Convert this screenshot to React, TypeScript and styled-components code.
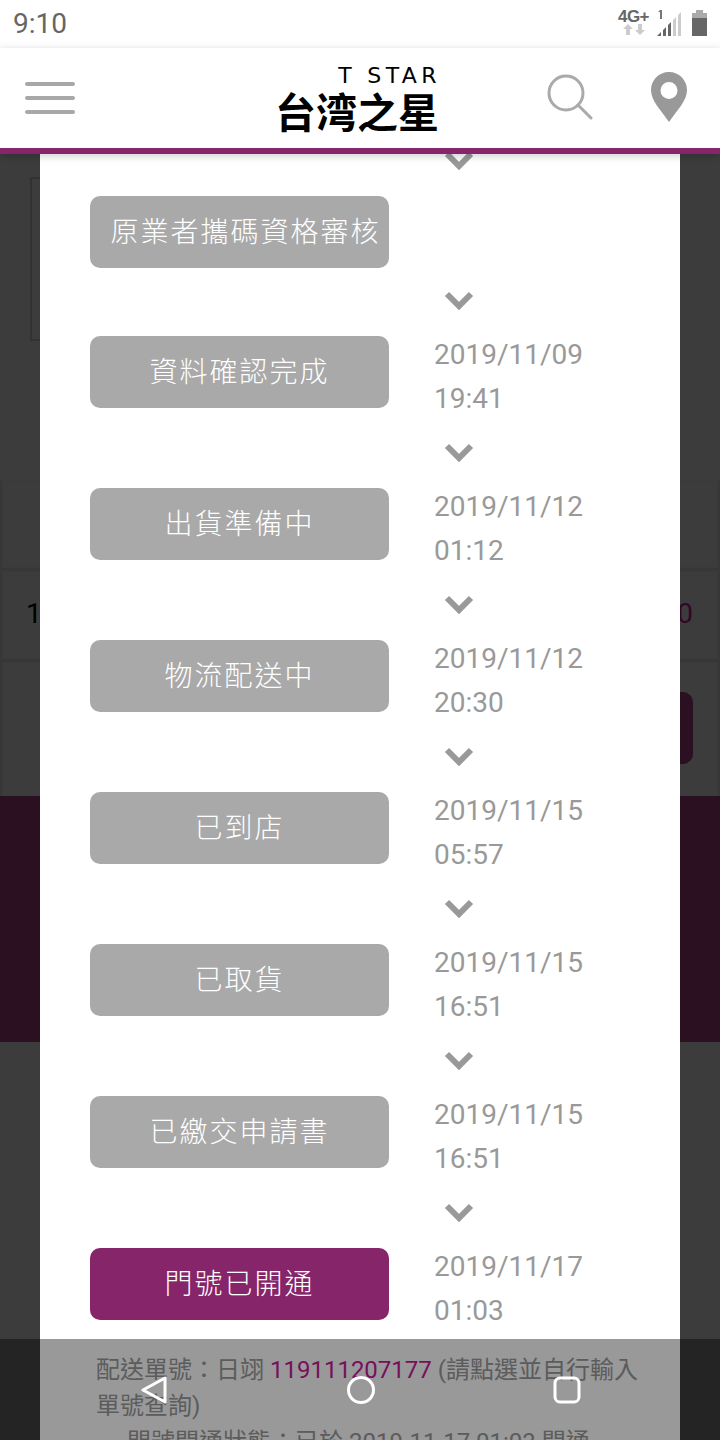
import { FC } from 'react';
import styled, { createGlobalStyle } from 'styled-components';

const GlobalStyle = createGlobalStyle`
  html, body {
    margin: 0;
    padding: 0;
    background: #fff;
  }
  * {
    box-sizing: border-box;
  }
`;

const Screen = styled.div`
  position: relative;
  display: flex;
  flex-direction: column;
  width: 720px;
  height: 1440px;
  overflow: hidden;
  font-family: Roboto, "Noto Sans CJK TC", sans-serif;
`;

/* status bar */
const StatusBar = styled.div`
  display: flex;
  align-items: center;
  justify-content: space-between;
  flex: none;
  height: 48px;
  padding: 0 13px;
  background: #fff;
`;

const Clock = styled.span`
  font-size: 28px;
  line-height: 1;
  color: #666;
`;

const StatusIcons = styled.div`
  display: flex;
  align-items: flex-start;
  height: 26px;
  margin-top: -2px;
`;

const Network = styled.div`
  display: flex;
  flex-direction: column;
  align-items: center;
  width: 31px;
  margin-right: 7px;
`;

const NetworkLabel = styled.span`
  font-family: "Liberation Sans", sans-serif;
  font-size: 17px;
  font-weight: 700;
  line-height: 14px;
  letter-spacing: -0.6px;
  white-space: nowrap;
  color: #666;
`;

const SignalIcon = styled.svg`
  margin-right: 10px;
`;

/* header */
const Header = styled.header`
  position: relative;
  z-index: 3;
  display: flex;
  align-items: center;
  flex: none;
  height: 106px;
  padding: 0 32px 6px 25px;
  background: #fff;
  border-bottom: 6px solid #86256a;
  box-shadow: 0 2px 8px rgba(0, 0, 0, 0.2);
`;

const Burger = styled.div`
  display: flex;
  flex-direction: column;
  gap: 10px;
  width: 50px;
  margin-right: 200px;
  margin-top: 5px;

  span {
    height: 4px;
    border-radius: 2px;
    background: #a8a8a8;
  }
`;

const Logo = styled.div`
  display: flex;
  flex-direction: column;
  align-items: flex-end;
  width: 164px;
  padding-top: 2px;
  color: #000;
  margin-right: 108px;
`;

const LogoLatin = styled.span`
  font-family: "DejaVu Sans", sans-serif;
  font-size: 22px;
  line-height: 22px;
  letter-spacing: 4.4px;
  margin: 6px -2px 0 0;
  white-space: nowrap;
`;

const LogoCjk = styled.span`
  font-family: "Noto Sans CJK TC", sans-serif;
  font-size: 41px;
  font-weight: 700;
  line-height: 46px;
  white-space: nowrap;
`;

const HeaderIcons = styled.div`
  display: flex;
  align-items: center;
  gap: 58px;
  margin-top: 4px;
`;

/* page behind the dialog */
const Stage = styled.div`
  position: relative;
  flex: 1;
  overflow: hidden;
  background: #f0f0f0;
`;

const InfoBox = styled.div`
  width: 300px;
  height: 164px;
  margin: 23px 0 139px 30px;
  border: 2px solid #c8c8c8;
`;

const Table = styled.div`
  display: flex;
  flex-direction: column;
  gap: 3px;
  background: #dcdcdc;
`;

const TableRow = styled.div<{ $height: number }>`
  display: flex;
  align-items: center;
  justify-content: space-between;
  height: ${p => p.$height}px;
  margin: 0 2px;
  padding: 0 24px 4px 23px;
  background: #f0f0f0;
  border: 1px solid #e8e8e8;
  font-size: 28px;
  color: #000;
`;

const Price = styled.span`
  color: #c8189a;
`;

const BuyButton = styled.div`
  width: 200px;
  height: 72px;
  margin-left: auto;
  margin-top: 2px;
  border-radius: 10px;
  background: #a8407f;
`;

const FooterBand = styled.div`
  height: 246px;
  background: #a8407f;
`;

const Scrim = styled.div`
  position: absolute;
  inset: 0;
  background: rgba(0, 0, 0, 0.75);
`;

/* dialog */
const Modal = styled.div`
  position: absolute;
  top: 0;
  bottom: 0;
  left: 40px;
  width: 640px;
  overflow: hidden;
  background: #fff;
`;

const Steps = styled.div`
  display: flex;
  flex-direction: column;
  margin-top: -26px;
  padding-left: 50px;
`;

const ArrowSlot = styled.div`
  display: flex;
  align-items: center;
  height: 64px;
  padding: 2px 0 0 353px;
  color: #999;
`;

const StepRow = styled.div`
  display: flex;
  align-items: flex-start;
  gap: 45px;
`;

const StepLabel = styled.div<{ $active?: boolean; $inset?: boolean }>`
  display: flex;
  align-items: center;
  justify-content: center;
  width: 299px;
  height: 72px;
  margin-top: 4px;
  padding: 0 0 4px ${p => (p.$inset ? 12 : 0)}px;
  border-radius: 10px;
  background: ${p => (p.$active ? '#86256a' : '#a9a9a9')};
  font-family: "Noto Sans CJK TC", sans-serif;
  font-size: 28px;
  font-weight: 300;
  letter-spacing: 2px;
  white-space: nowrap;
  color: #fff;
`;

const StepDate = styled.div`
  width: 170px;
  margin: 1px 0 -1px;
  font-size: 28px;
  line-height: 44px;
  color: #999;
`;

const Notes = styled.div`
  margin-top: 20px;
  padding: 0 40px 0 56px;
  font-size: 24px;
  line-height: 36px;
  color: #999;
`;

const TrackingLink = styled.span`
  color: #c8189a;
`;

const NoteList = styled.ul`
  margin: 0;
  padding-left: 31px;
`;

/* android nav bar */
const NavBar = styled.div`
  position: absolute;
  z-index: 4;
  left: 0;
  right: 0;
  bottom: 0;
  display: flex;
  align-items: flex-start;
  height: 101px;
  padding: 37px 139px 0 140px;
  justify-content: space-between;
  background: rgba(0, 0, 0, 0.4);
`;

const steps = [
  { label: '原業者攜碼資格審核', inset: true },
  { label: '資料確認完成', date: '2019/11/09', time: '19:41' },
  { label: '出貨準備中', date: '2019/11/12', time: '01:12' },
  { label: '物流配送中', date: '2019/11/12', time: '20:30' },
  { label: '已到店', date: '2019/11/15', time: '05:57' },
  { label: '已取貨', date: '2019/11/15', time: '16:51' },
  { label: '已繳交申請書', date: '2019/11/15', time: '16:51' },
  { label: '門號已開通', date: '2019/11/17', time: '01:03', active: true },
];

const Chevron: FC = () => (
  <svg width="32" height="20" viewBox="0 0 32 20" fill="none">
    <path d="M4 3l12 12L28 3" stroke="currentColor" strokeWidth="6" />
  </svg>
);

const App: FC = () => (
  <Screen>
    <GlobalStyle />
    <StatusBar>
      <Clock>9:10</Clock>
      <StatusIcons>
        <Network>
          <NetworkLabel>4G+</NetworkLabel>
          <svg width="22" height="11" viewBox="0 0 22 11" fill="#ccc">
            <path d="M5 0l5 5H7v6H3V5H0zM17 11l5-5h-3V0h-4v6h-3z" />
          </svg>
        </Network>
        <SignalIcon width="26" height="26" viewBox="0 0 26 26">
          <path d="M4 0h2v9H4V2H2z" fill="#777" />
          <path d="M1 26l4-4v4zM7 20l3-3v9H7zM12 15l3-3v14h-3z" fill="#666" />
          <path d="M17 10l3-3v19h-3zM22 5l3-3v24h-3z" fill="#ccc" />
        </SignalIcon>
        <svg width="15" height="26" viewBox="0 0 15 26">
          <path d="M4 0h7v3h4v5H0V3h4z" fill="#aaa" />
          <path d="M0 8h15v18H0z" fill="#666" />
        </svg>
      </StatusIcons>
    </StatusBar>

    <Header>
      <Burger>
        <span />
        <span />
        <span />
      </Burger>
      <Logo>
        <LogoLatin>T STAR</LogoLatin>
        <LogoCjk>台湾之星</LogoCjk>
      </Logo>
      <HeaderIcons>
        <svg width="46" height="46" viewBox="0 0 46 46" fill="none" stroke="#aaa" strokeWidth="3">
          <circle cx="19" cy="19" r="17" />
          <path d="M31 31l13 13" strokeLinecap="round" />
        </svg>
        <svg width="36" height="50" viewBox="0 0 36 50">
          <path
            fillRule="evenodd"
            fill="#999"
            d="M18 0C8 0 0 8 0 18c0 11 10 20 18 32 8-12 18-21 18-32C36 8 28 0 18 0zm0 10a8.500 8.500 0 1 1 0 17 8.500 8.500 0 0 1 0-17z"
          />
        </svg>
      </HeaderIcons>
    </Header>

    <Stage>
      <InfoBox />
      <Table>
        <TableRow $height={88} />
        <TableRow $height={88}>
          <span>1</span>
          <Price>0</Price>
        </TableRow>
        <TableRow $height={134}>
          <BuyButton />
        </TableRow>
      </Table>
      <FooterBand />
      <Scrim />
      <Modal>
        <Steps>
          <ArrowSlot>
            <Chevron />
          </ArrowSlot>
          {steps.map((step, i) => (
            <div key={step.label}>
              <StepRow>
                <StepLabel $active={step.active} $inset={step.inset}>
                  {step.label}
                </StepLabel>
                {step.date && (
                  <StepDate>
                    {step.date}
                    <br />
                    {step.time}
                  </StepDate>
                )}
              </StepRow>
              {i < steps.length - 1 && (
                <ArrowSlot>
                  <Chevron />
                </ArrowSlot>
              )}
            </div>
          ))}
        </Steps>
        <Notes>
          配送單號：日翊 <TrackingLink>119111207177</TrackingLink> (請點選並自行輸入單號查詢)
          <NoteList>
            <li>門號開通狀態：已於 2019-11-17 01:03 開通</li>
          </NoteList>
        </Notes>
      </Modal>
    </Stage>

    <NavBar>
      <svg width="28" height="28" viewBox="0 0 28 28" fill="none" stroke="#fff" strokeWidth="3" strokeLinejoin="round">
        <path d="M25 2v24L3 14z" />
      </svg>
      <svg width="28" height="28" viewBox="0 0 28 28" fill="none" stroke="#fff" strokeWidth="3">
        <circle cx="14" cy="14" r="12.500" />
      </svg>
      <svg width="28" height="28" viewBox="0 0 28 28" fill="none" stroke="#fff" strokeWidth="3">
        <rect x="2" y="2" width="24" height="24" rx="5" />
      </svg>
    </NavBar>
  </Screen>
);

export default App;
